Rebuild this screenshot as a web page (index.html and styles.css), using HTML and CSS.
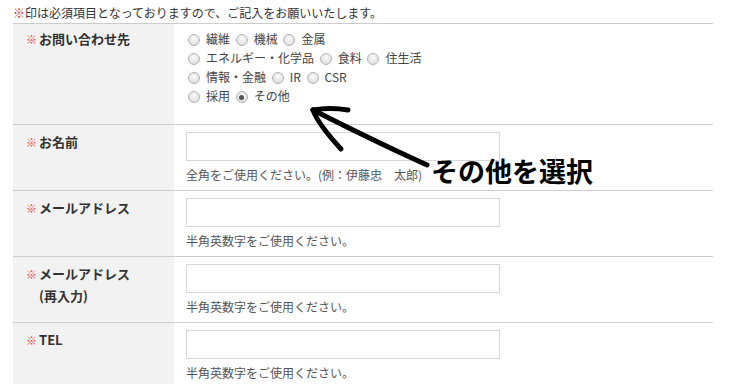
FILE: index.html
```html
<!DOCTYPE html>
<html lang="ja">
<head>
  <meta charset="UTF-8">
  <title>お問い合わせ</title>
  <link rel="stylesheet" href="styles.css">
</head>
<body>
  <div class="page">
    <p class="note"><span class="req">※</span>印は必須項目となっておりますので、ご記入をお願いいたします。</p>
    <table class="form">
      <tr class="row-kind">
        <th><span class="mark">※</span><span class="name">お問い合わせ先</span></th>
        <td>
          <div class="choices">
            <label><input type="radio" name="kind">繊維</label>
            <label><input type="radio" name="kind">機械</label>
            <label><input type="radio" name="kind">金属</label><br>
            <label><input type="radio" name="kind">エネルギー・化学品</label>
            <label><input type="radio" name="kind">食料</label>
            <label><input type="radio" name="kind">住生活</label><br>
            <label><input type="radio" name="kind">情報・金融</label>
            <label><input type="radio" name="kind">IR</label>
            <label><input type="radio" name="kind">CSR</label><br>
            <label><input type="radio" name="kind">採用</label>
            <label><input type="radio" name="kind" checked>その他</label>
          </div>
        </td>
      </tr>
      <tr>
        <th><span class="mark">※</span><span class="name">お名前</span></th>
        <td>
          <input class="field" type="text">
          <p class="hint">全角をご使用ください。(例：伊藤忠　太郎)</p>
        </td>
      </tr>
      <tr>
        <th><span class="mark">※</span><span class="name">メールアドレス</span></th>
        <td>
          <input class="field" type="text">
          <p class="hint">半角英数字をご使用ください。</p>
        </td>
      </tr>
      <tr>
        <th><span class="mark">※</span><span class="name">メールアドレス<br>(再入力)</span></th>
        <td>
          <input class="field" type="text">
          <p class="hint">半角英数字をご使用ください。</p>
        </td>
      </tr>
      <tr>
        <th><span class="mark">※</span><span class="name">TEL</span></th>
        <td>
          <input class="field" type="text">
          <p class="hint">半角英数字をご使用ください。</p>
        </td>
      </tr>
    </table>

    <!-- hand drawn annotation -->
    <svg class="arrow" width="740" height="384" viewBox="0 0 740 384">
      <path d="M427 165 Q372 140 313 110" />
      <path d="M313 110 Q330 107 348 110" />
      <path d="M313 110 Q318 124 341 149" />
    </svg>
    <div class="callout">その他を選択</div>
  </div>
</body>
</html>
```

FILE: styles.css
```css
html, body {
  margin: 0;
  padding: 0;
  background: #fff;
  font-family: "Noto Sans CJK JP", "Noto Sans", sans-serif;
  color: #444;
  overflow: hidden;
}
.page {
  position: relative;
  width: 740px;
  height: 384px;
}
.note {
  margin: 0;
  padding: 5px 0 2px 13px;
  font-size: 12px;
  line-height: 16px;
  color: #333;
}
.req {
  color: #d22;
}
.form {
  margin-left: 13px;
  width: 700px;
  border-collapse: collapse;
}
.form tr {
  border-top: 1px solid #ccc;
  border-bottom: 1px solid #ccc;
}
.form th {
  width: 148px;
  padding: 6px 0 0 13px;
  background-color: #f2f2f2;
  text-align: left;
  vertical-align: top;
  font-size: 13px;
  line-height: 22px;
  color: #333;
}
.form th .mark {
  display: inline-block;
  vertical-align: top;
  width: 13px;
  font-size: 11px;
  font-weight: normal;
  color: #e04a3a;
}
.form th .name {
  display: inline-block;
  vertical-align: top;
  font-weight: bold;
}
.form td {
  padding: 7px 12px 7px 12px;
  vertical-align: top;
}
.row-kind th {
  height: 95px;
  padding-top: 4px;
}
.row-kind td {
  padding: 5px 12px 19px 12px;
}
.choices {
  font-size: 12px;
  line-height: 19px;
  color: #444;
}
.choices label {
  margin-right: 1px;
}
.choices input {
  appearance: none;
  -webkit-appearance: none;
  width: 12px;
  height: 12px;
  margin: 0 6px 0 2px;
  border: 1px solid #b5b5b5;
  border-radius: 50%;
  background: radial-gradient(circle at 50% 35%, #fafafa 0%, #e2e2e2 70%, #d6d6d6 100%);
  vertical-align: -2px;
  position: relative;
}
.choices input:checked::after {
  content: "";
  position: absolute;
  left: 2.5px;
  top: 2.5px;
  width: 5px;
  height: 5px;
  border-radius: 50%;
  background: #555;
}
.field {
  display: block;
  box-sizing: border-box;
  width: 314px;
  height: 29px;
  margin: 0;
  border: 1px solid #d6d6d6;
  background: #fff;
}
.hint {
  margin: 5px 0 0 0;
  font-size: 12px;
  line-height: 17px;
  color: #555;
}
.arrow {
  position: absolute;
  left: 0;
  top: 0;
  pointer-events: none;
}
.arrow path {
  fill: none;
  stroke: #000;
  stroke-width: 5;
  stroke-linecap: round;
  stroke-linejoin: round;
}
.callout {
  position: absolute;
  left: 431px;
  top: 153px;
  font-size: 27px;
  line-height: 36px;
  font-weight: bold;
  color: #000;
  white-space: nowrap;
}
```
